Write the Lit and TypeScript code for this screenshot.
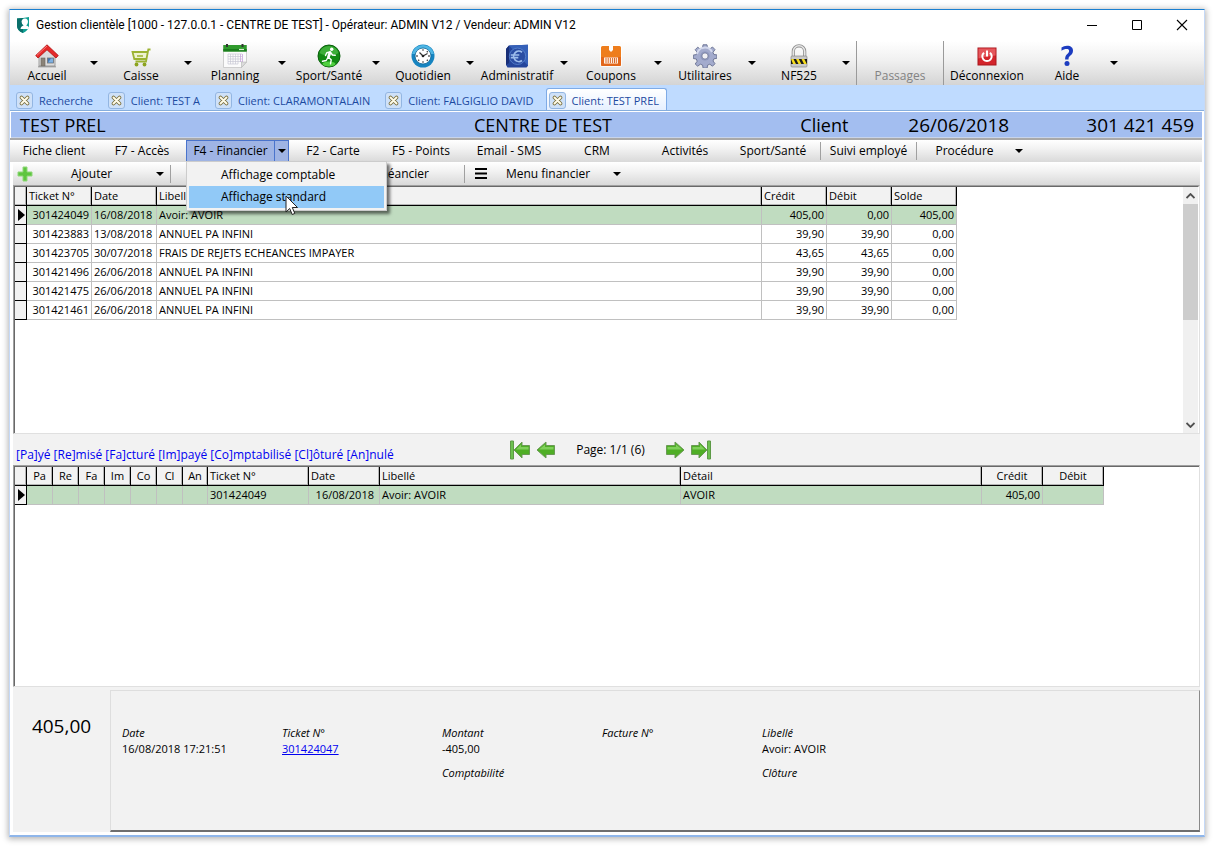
import { LitElement, html, css, svg, nothing, TemplateResult } from "lit";
import { customElement } from "lit/decorators.js";
import { classMap } from "lit/directives/class-map.js";

const icon = (body: TemplateResult, cls = "icon", box = "0 0 24 24") =>
  html`<svg class=${cls} viewBox=${box} aria-hidden="true">${body}</svg>`;

const icons: Record<string, TemplateResult> = {
  home: svg`
    <path d="M4 12 12 5l8 7v10H4z" fill="#dcdcdc" stroke="#8b8b8b" stroke-width=".8"/>
    <rect x="6" y="14" width="4" height="8" fill="#8a8378" stroke="#6b665e" stroke-width=".6"/>
    <rect x="12.500" y="14" width="6" height="5" fill="#3f78b5" stroke="#777" stroke-width=".8"/>
    <path d="M13 18.500l3-4h2v4z" fill="#7fb0e0"/>
    <path d="M12 .8 23.300 11.500l-2.300 2.500L12 5.800 3 14 .7 11.500z" fill="#e52a2a" stroke="#b31212" stroke-width=".8" stroke-linejoin="round"/>
    <path d="M12 2 2 11.300" stroke="#f77" stroke-width="1" fill="none"/>
    <path d="M3 22.800h18" stroke="#8b8b8b" stroke-width="1"/>`,
  cart: svg`
    <path d="M3.500 8h15l-1 7H5.500z" fill="#eef3cf"/>
    <path d="M21.500 5.500h-2.200L17 17.500H6.500M18.800 8H3.500l1.800 7h12" fill="none" stroke="#9cb332" stroke-width="1.800"/>
    <path d="M8 12h6" stroke="#9cb332" stroke-width="1.500"/>
    <circle cx="7.500" cy="20.500" r="1.900" fill="#8ba31f"/><circle cx="15.500" cy="20.500" r="1.900" fill="#8ba31f"/>`,
  calendar: svg`
    <path d="M.5 1.500h23V18l-5 5.500H.5z" fill="#fbfbfb" stroke="#c4c4c4" stroke-width=".8"/>
    <path d="M.3 1h23.400v6.500H.3z" fill="#2f9a2c"/><path d="M.3 5h23.400v2.500H.3z" fill="#1b7d1d"/>
    <path d="M4 0v3M19.500 0v3" stroke="#333" stroke-width="2"/><path d="M16 5.500h5" stroke="#d7f2d0" stroke-width="1.200"/>
    <path d="M5 10h14M5 12.500h14M5 15h14M5 17.500h14M5 20h10M5 10v10M7.500 10v10M10 10v10M12.500 10v10M15 10v10" stroke="#c9c9d4" stroke-width=".7" fill="none"/>
    <path d="M17.500 10v8M19.500 10v8" stroke="#c8a6dc" stroke-width=".8"/>
    <path d="M18.500 23.500V18h5z" fill="#ddd" stroke="#aaa" stroke-width=".5"/>`,
  runner: svg`
    <circle cx="12" cy="12" r="11" fill="#128a12" stroke="#0a5f0c" stroke-width="1"/>
    <path d="M2.500 9a10 10 0 0 1 19 0c-6 3.500-13 3.500-19 0z" fill="#4cba46" opacity=".75"/>
    <ellipse cx="12" cy="20" rx="6.500" ry="2.500" fill="#5fe04b" opacity=".8"/>
    <circle cx="14.700" cy="5.200" r="1.700" fill="#fff"/>
    <path d="M13 8l-1.800 5 3 2.800-.7 4M11.200 13l-2 3.500-3.700.8M13 8l-3.200.7-1.300 2.800M13.500 8.300l2 2.700 2.700.3" fill="none" stroke="#fff" stroke-width="1.400" stroke-linecap="round" stroke-linejoin="round"/>
    <path d="M13 8.500l-1.500 4.500" stroke="#fff" stroke-width="2.600" stroke-linecap="round"/>`,
  clock: svg`
    <circle cx="12" cy="12" r="11.500" fill="#1684c0"/><path d="M1 10a11.200 11.200 0 0 1 22 0z" fill="#4fb6e4"/>
    <circle cx="12" cy="12" r="8" fill="#fff" stroke="#0d6597" stroke-width=".8"/>
    <path d="M12 12 8.500 8.500M12 12l4.500-2.500" stroke="#333" stroke-width="1.200"/><circle cx="12" cy="12" r="1.300" fill="#222"/>
    <path d="M12 5.200v1.600M12 17.200v1.600M5.200 12h1.600M17.200 12h1.600M7.200 16.800l1-1M16.800 16.800l-1-1M16.800 7.200l-1 1" stroke="#444" stroke-width="1.300"/>`,
  euro: svg`
    <path d="M4 1.500 23 .8v21L21.500 23.500H2.500L1 21V5z" fill="#24459b"/>
    <path d="M4 1.500 23 .8v21z" fill="#3560b8"/><path d="M4 1.500 1 5v16l3-2z" fill="#182f78"/>
    <circle cx="12.500" cy="12.300" r="8.200" fill="#2a4da3" stroke="#5b86d0" stroke-width=".8"/>
    <path d="M17 8.200A5.200 5.200 0 1 0 17 16.500M5.800 11h8.500M5.800 13.600h7.500" fill="none" stroke="#9dbdec" stroke-width="1.700"/>`,
  coupon: svg`
    <rect x="1" y="1" width="22" height="22" rx="2" fill="#fff" opacity=".8"/>
    <path d="M2 3.500Q2 2 3.500 2H10v4l2 2 2-2V2h6.500Q22 2 22 3.500v17q0 1.500-1.500 1.500h-17Q2 22 2 20.500z" fill="#ee7d1c"/>
    <path d="M2 13h20v7.500q0 1.500-1.500 1.500h-17Q2 22 2 20.500z" fill="#e2661a"/>
    <rect x="5" y="13.500" width="14" height="6" fill="#fff3e6"/>
    <path d="M7 14v5M9.200 14v5M11.400 14v5M13.600 14v5M15.500 14v5M17.300 14v5" stroke="#d9682a" stroke-width="1"/>`,
  gear: svg`
    <path d="M10 .8h4l.5 3.300 2.200.9L19.500 3l2.500 2.600-2 2.700.9 2.200 3 .4v3.400l-3 .5-.9 2.200 2 2.700-2.500 2.500-2.700-2-2.200.9-.5 3h-4l-.5-3-2.200-.9-2.700 2L2.200 20l2-2.800-.9-2.200-3-.5v-3.400l3-.5.9-2.200-2-2.700L4.700 3.200l2.700 2 2.200-.9z" fill="#a3abcd" stroke="#707898" stroke-width="1" stroke-linejoin="round"/>
    <path d="M4 10a8 8 0 0 1 15-2" fill="none" stroke="#d3d8ec" stroke-width="2"/>
    <circle cx="12" cy="12" r="4.600" fill="#8d96bb"/><circle cx="12" cy="12" r="3" fill="#f1f1f4" stroke="#6a7190" stroke-width=".6"/>`,
  lock: svg`
    <path d="M6.300 13V7.500a5.700 5.700 0 0 1 11.400 0V13" fill="none" stroke="#8f8f8f" stroke-width="3.200"/>
    <path d="M6.300 13V7.500a5.700 5.700 0 0 1 11.400 0V13" fill="none" stroke="#e6e6e6" stroke-width="1.600"/>
    <rect x="4" y="12" width="16" height="11" rx="1" fill="#c9c9c9" stroke="#888" stroke-width=".7"/>
    <rect x="4" y="15" width="16" height="5" fill="#1b1b1b"/>
    <path d="M4 15h2.500l2.500 5H6zM9 15h2.800l2.500 5h-2.800zM14.500 15h2.800l2.500 5H17z" fill="#f6dc1c"/>`,
  power: svg`
    <rect x="3" y="4" width="18" height="17" fill="#d3242b" stroke="#a8161c" stroke-width="1"/><path d="M3.500 4.500h17v7c-6 1-12 1-17 3z" fill="#e4575c"/>
    <path d="M9 8.800a4.700 4.700 0 1 0 6 0M12 6.500v6" fill="none" stroke="#fff" stroke-width="2"/>`,
  help: svg`
    <path d="M6.500 6.800V3.500Q8.800 1.800 12 1.800c4 0 6 2 6 5 0 2.700-1.600 3.900-3.100 5.200-1 .9-1.400 1.600-1.400 3.500h-3.400c0-2.800.6-4.200 2.200-5.600 1.200-1 1.800-1.700 1.800-2.900 0-1.400-.9-2-2.400-2-1.900 0-3.600.6-5.200 1.800z" fill="#1c3cc0"/>
    <circle cx="12" cy="19.500" r="2.500" fill="#1c3cc0"/>`,
};

interface Tool { label: string; icon?: string; menu?: boolean; disabled?: boolean; sep?: boolean; size: string }
const tools: Tool[] = [
  { label: "Accueil", icon: "home", menu: true, size: "std" },
  { label: "Caisse", icon: "cart", menu: true, size: "std" },
  { label: "Planning", icon: "calendar", menu: true, size: "std" },
  { label: "Sport/Santé", icon: "runner", menu: true, size: "std" },
  { label: "Quotidien", icon: "clock", menu: true, size: "std" },
  { label: "Administratif", icon: "euro", menu: true, size: "std" },
  { label: "Coupons", icon: "coupon", menu: true, size: "std" },
  { label: "Utilitaires", icon: "gear", menu: true, size: "std" },
  { label: "NF525", icon: "lock", menu: true, size: "std" },
  { label: "Passages", disabled: true, sep: true, size: "wide" },
  { label: "Déconnexion", icon: "power", sep: true, size: "wide" },
  { label: "Aide", icon: "help", menu: true, size: "std" },
];

const tabs = ["Recherche", "Client: TEST A", "Client: CLARAMONTALAIN", "Client: FALGIGLIO DAVID", "Client: TEST PREL"];

const tickets = [
  ["301424049", "16/08/2018", "Avoir: AVOIR", "405,00", "0,00", "405,00"],
  ["301423883", "13/08/2018", "ANNUEL PA INFINI", "39,90", "39,90", "0,00"],
  ["301423705", "30/07/2018", "FRAIS DE REJETS ECHEANCES IMPAYER", "43,65", "43,65", "0,00"],
  ["301421496", "26/06/2018", "ANNUEL PA INFINI", "39,90", "39,90", "0,00"],
  ["301421475", "26/06/2018", "ANNUEL PA INFINI", "39,90", "39,90", "0,00"],
  ["301421461", "26/06/2018", "ANNUEL PA INFINI", "39,90", "39,90", "0,00"],
];

const flags = ["Pa", "Re", "Fa", "Im", "Co", "Cl", "An"];

@customElement("app-root")
export class AppRoot extends LitElement {
  static styles = css`
    :host { display: block; background: #fff; color: #000; font: 12px/16px "Open Sans", "Noto Sans", sans-serif; }
    * { box-sizing: border-box; }
    button { font: inherit; color: inherit; background: none; border: 0; padding: 0; margin: 0; white-space: nowrap; }
    .stage { min-height: 100vh; padding: 9px 8px 9px 9px; display: flex; }
    .window { flex: 1; min-width: 0; display: flex; flex-direction: column; background: #fff;
      border: 1px solid #c5d9f7; border-top-color: #1a7fd0; border-bottom: 2px solid #8fb6ea;
      box-shadow: 0 1px 6px 1px rgba(0, 0, 0, .3); }

    .titlebar { display: flex; align-items: center; height: 31px; padding: 0 0 2px 6px; font: 12px/16px Roboto, sans-serif; }
    .logo { width: 14px; height: 16px; margin-right: 6px; }
    .caption { flex: 1; margin: 0; font: inherit; }
    .winbtn { width: 45px; height: 28px; display: grid; place-items: center; }
    .winbtn svg { width: 12px; height: 12px; }

    .toolbar { display: flex; height: 44px; background: linear-gradient(#fff, #f0f0f0 45%, #d4d4d4); }
    .tool { display: flex; padding-bottom: 1px; }
    .tool.sep { border-left: 1px solid #9a9a9a; }
    .tool-main { display: flex; flex-direction: column; align-items: center; justify-content: flex-end; }
    .tool.std .tool-main { width: 74px; }
    .tool.wide .tool-main { width: 86px; }
    .tool-main:disabled { color: #838383; }
    .icon { width: 24px; height: 24px; display: block; }
    .drop { width: 20px; display: grid; place-items: center; }
    .caret { width: 8px; height: 4px; display: block; fill: #000; }

    .tabs { display: flex; align-items: flex-end; gap: 4px; height: 26px; padding: 0 3px; background: #bfdbff;
      border-bottom: 1px solid #86aedd; font-size: 11px; color: #1c4aa0; }
    .tab { display: flex; align-items: center; gap: 6px; height: 22px; padding: 2px 7px 0 2px; border: 1px solid transparent; border-bottom: 0; }
    .tab.on { border-color: #7fabe6; border-radius: 3px 3px 0 0; background: linear-gradient(#fff, #e6f0ff); }
    .close { width: 17px; height: 17px; border: 1px solid #93b6e2; border-radius: 3px; background: #cfe1f8; display: grid; place-items: center; }
    .close svg { width: 11px; height: 11px; }

    .band { display: grid; grid-template-columns: 454px 1fr auto; align-items: center; height: 26px; margin: 1px 2px 0 1px; padding: 0 8px 0 9px;
      background: #a3bef0; border-bottom: 1px solid #c8d4ea; font-size: 18px; line-height: 24px; }
    .band .who { display: grid; grid-template-columns: 108px 178px auto; }
    .band .number { font-size: 19px; }

    .menubar, .subbar { display: flex; background: linear-gradient(#fff, #f2f2f2 40%, #d9d9d9); }
    .menubar { position: relative; height: 24px; margin-right: 2px; border-top: 2px solid #a9a9a9; }
    .mi { width: 88px; text-align: center; }
    .split { display: flex; width: 103px; border: 1px solid #4a74cc; background: #9fb4e4; position: relative; }
    .split .mi { flex: 1; width: auto; }
    .menubar .drop { width: 14px; }
    .split .drop { border-left: 1px solid #4a74cc; }
    .rule { border-left: 1px solid #a0a0a0; margin: 2px 0 2px 3px; }
    .rule.tight { margin-left: 0; }
    .mi.wide { width: 95px; }

    .popup { position: absolute; z-index: 5; left: -1px; top: 20px; width: 201px; margin: 0; padding: 2px; list-style: none;
      background: #f2f2f2; border: 1px solid #ccc; box-shadow: 3px 3px 3px rgba(0, 0, 0, .55); }
    .popup button { display: block; width: 100%; height: 22px; padding-left: 32px; text-align: left; }
    .popup .hot { background: #91c9f7; }
    .cursor { position: absolute; z-index: 6; left: 98px; top: 54px; width: 14px; height: 21px; }

    .body { flex: 1; display: flex; flex-direction: column; padding: 0 4px 3px 3px; background: #fff; }
    .subbar { height: 23px; align-items: center; }
    .subbar .rule { height: 18px; margin: 0; }
    .plus { width: 16px; height: 16px; margin-left: 4px; }
    .add { width: 117px; text-align: center; }
    .due { width: 293px; padding-right: 35px; text-align: right; }
    .bars { width: 12px; height: 11px; margin: 0 10px; }
    .fin { width: 102px; margin-right: 8px; }

    .pane { display: flex; background: #fff; border: 1px solid #e0e0e0; border-left-color: #a0a0a0; border-top-color: #a0a0a0; }
    .pane.main { flex: 249 1 249px; }
    .pane.lines { flex: 222 1 222px; }
    .grid-wrap { flex: 1; min-width: 0; overflow: hidden; border-left: 1px solid #696969; border-top: 1px solid #696969; }
    table { border-collapse: separate; border-spacing: 0; table-layout: fixed; font-size: 11px; line-height: 16px; }
    .t1 { width: 942px; } .t2 { width: 1089px; }
    th { height: 19px; padding: 0 2px; text-align: left; font-weight: normal; background: #f2f2f2; white-space: nowrap;
      border-right: 1px solid #000; border-bottom: 1px solid #000; box-shadow: inset -1px -1px #b5b5b5; }
    th.mid { text-align: center; }
    td { height: 19px; padding: 0 2px; border-right: 1px solid #c0c0c0; border-bottom: 1px solid #c0c0c0; white-space: nowrap; overflow: hidden; }
    td.num { text-align: right; }
    td.date { text-align: right; padding-right: 5px; }
    tr.sel td { background: #c0dcc0; }
    td.mark, tr.sel td.mark { padding: 0; background: #f2f2f2; border-right-color: #000; border-bottom-color: #000; }
    td.mark svg { display: block; width: 7px; height: 12px; margin-left: 3px; }
    .c-mark { width: 12px; } .c-65 { width: 65px; } .c-605 { width: 605px; }
    .c-26 { width: 26px; } .c-25 { width: 25px; } .c-101 { width: 101px; } .c-71 { width: 71px; } .c-301 { width: 301px; } .c-61 { width: 61px; }

    .scroll { width: 16px; display: flex; flex-direction: column; background: #f0f0f0; border-top: 1px solid #696969; border-right: 1px solid #fff; }
    .scroll button { height: 17px; display: grid; place-items: center; }
    .scroll .down { margin-top: auto; }
    .scroll svg { width: 9px; height: 6px; }
    .thumb { height: 116px; background: #cdcdcd; }

    .pager { display: grid; grid-template-columns: 1fr auto 1fr; height: 31px; padding-left: 3px; background: #f2f2f2; }
    .legend { align-self: end; color: #0000f0; white-space: nowrap; line-height: 20px; }
    .nav { display: flex; align-items: center; gap: 6px; margin-left: 5px; }
    .nav span { margin: 0 14px; }
    .nav svg { width: 20px; height: 20px; display: block; }

    .foot { display: flex; height: 145px; padding-top: 3px; background: #f2f2f2; }
    .total { width: 97px; padding-top: 23px; text-align: center; font-size: 19px; line-height: 26px; }
    .detail { flex: 1; display: grid; grid-template-columns: repeat(5, 160px); align-content: start; margin: 0; padding: 34px 0 0 11px;
      border: 1px solid #dedede; border-right: 1px solid #8a8a8a; border-bottom: 2px solid #6e6e6e; font-size: 11px; line-height: 16px; }
    .field { min-height: 40px; }
    dt { font-style: italic; } dd { margin: 0; }
    a { color: #0000f0; }
  `;

  private caret() { return html`<svg class="caret" viewBox="0 0 8 4" aria-hidden="true"><path d="M0 0h8L4 4z"/></svg>`; }

  private tool(t: Tool) {
    return html`<div class=${classMap({ tool: true, [t.size]: true, sep: !!t.sep })}>
      <button class="tool-main" ?disabled=${t.disabled}>${t.icon ? icon(icons[t.icon]) : nothing}<span>${t.label}</span></button>
      ${t.menu ? html`<button class="drop" aria-label=${t.label + " : menu"}>${this.caret()}</button>` : nothing}
    </div>`;
  }

  private mark(on: boolean) {
    return html`<td class="mark">${on ? html`<svg viewBox="0 0 7 12" aria-hidden="true"><path d="M0 0l7 6-7 6z"/></svg>` : nothing}</td>`;
  }

  private arrow(label: string, right: boolean, bar: boolean) {
    return html`<button aria-label=${label}><svg viewBox="0 0 20 20" aria-hidden="true"><g transform=${right ? "matrix(-1 0 0 1 20 0)" : "translate(0 0)"}>
      ${bar ? svg`<path d="M.5 1h3v18h-3z" fill="#6cc04f" stroke="#5d9a46"/>` : nothing}
      <path d=${bar ? "M4 10l8-8v3.500h7.500v9H12v3.500z" : "M1 10l9-8v3.500h8.500v9H10v3.500z"} fill="#4fae25" stroke="#6a9a55" stroke-linejoin="round"/>
      <path d=${bar ? "M6 9.500l5-5v2.500h7.500v2.500z" : "M3 9.500l6-5v2.500h8.500v2.500z"} fill="#7fcf5a"/></g></svg></button>`;
  }

  private field(label: string, value: unknown = nothing) {
    return html`<div class="field"><dt>${label}</dt><dd>${value}</dd></div>`;
  }

  render() {
    return html`<div class="stage"><main class="window">
      <header class="titlebar">
        <svg class="logo" viewBox="0 0 14 16" aria-hidden="true"><path d="M1 1.500Q7 1 13 0v9.500q-1 4-6 6.500Q1 13.500 1 9z" fill="#0f9f93"/><path d="M1 1.500Q4 1.300 7 .9V16Q1 13.500 1 9z" fill="#0b6f6a"/><path d="M5.500 4.500Q6 1.500 9 1.500t3 3.500q-.3 2.500-1.800 3.500 2.300.5 2.800 2l-.7 1.500H4.500q.3-3 3.200-3.500Q5.500 7 5.500 4.500z" fill="#fff"/></svg>
        <h1 class="caption">Gestion clientèle [1000 - 127.0.0.1 - CENTRE DE TEST] - Opérateur: ADMIN V12 / Vendeur: ADMIN V12</h1>
        <button class="winbtn" aria-label="Réduire"><svg viewBox="0 0 12 12"><path d="M1 6.500h10" stroke="#000"/></svg></button>
        <button class="winbtn" aria-label="Agrandir"><svg viewBox="0 0 12 12"><path d="M1.500 1.500h9v9h-9z" fill="none" stroke="#000"/></svg></button>
        <button class="winbtn" aria-label="Fermer"><svg viewBox="0 0 12 12"><path d="M1 1l10 10M11 1L1 11" stroke="#000" stroke-width="1.100"/></svg></button>
      </header>
      <nav class="toolbar">${tools.map((t) => this.tool(t))}</nav>
      <nav class="tabs">${tabs.map((t, i) => html`<div class=${classMap({ tab: true, on: i === tabs.length - 1 })}>
        <button class="close" aria-label=${"Fermer " + t}><svg viewBox="0 0 11 11"><path d="M2.500 2.500l6 6M8.500 2.500l-6 6" stroke="#776c3a" stroke-width="3.600" stroke-linecap="round"/><path d="M2.500 2.500l6 6M8.500 2.500l-6 6" stroke="#fffbe8" stroke-width="2" stroke-linecap="round"/></svg></button>
        <button>${t}</button></div>`)}</nav>
      <div class="band"><span>TEST PREL</span><span>CENTRE DE TEST</span>
        <div class="who"><span>Client</span><span class="number">26/06/2018</span><span class="number">301 421 459</span></div></div>
      <nav class="menubar">
        <button class="mi">Fiche client</button><button class="mi">F7 - Accès</button>
        <div class="split"><button class="mi">F4 - Financier</button><button class="drop" aria-label="F4 - Financier : menu" aria-expanded="true">${this.caret()}</button>
          <ul class="popup"><li><button>Affichage comptable</button></li><li><button class="hot">Affichage standard</button></li></ul>
          <svg class="cursor" viewBox="0 0 14 21" aria-hidden="true"><path d="M1 1v16l3.700-3.500L7.200 19.500l2.600-1.100-2.500-5.900h5.200z" fill="#fff" stroke="#222" stroke-width="1"/></svg>
        </div>
        <button class="mi">F2 - Carte</button><button class="mi">F5 - Points</button><button class="mi">Email - SMS</button><button class="mi">CRM</button>
        <button class="mi">Activités</button><button class="mi">Sport/Santé</button><span class="rule"></span>
        <button class="mi wide">Suivi employé</button><span class="rule tight"></span><button class="mi wide">Procédure</button>
        <button class="drop" aria-label="Procédure : menu">${this.caret()}</button>
      </nav>
      <div class="body">
        <div class="subbar">
          <svg class="plus" viewBox="0 0 16 16" aria-hidden="true"><path d="M6 1h4v5h5v4h-5v5H6v-5H1V6h5z" fill="#5fc540" stroke="#8fd878"/></svg>
          <button class="add">Ajouter</button><button class="drop" aria-label="Ajouter : menu">${this.caret()}</button><span class="rule"></span>
          <button class="due">Échéancier</button><span class="rule"></span>
          <svg class="bars" viewBox="0 0 12 11" aria-hidden="true"><path d="M0 1h12M0 5.500h12M0 10h12" stroke="#000" stroke-width="2"/></svg>
          <button class="fin">Menu financier</button><button class="drop" aria-label="Menu financier : menu">${this.caret()}</button>
        </div>
        <section class="pane main"><div class="grid-wrap"><table class="t1">
          <thead><tr><th class="c-mark"></th><th class="c-65">Ticket N°</th><th class="c-65">Date</th><th class="c-605">Libellé</th><th class="c-65">Crédit</th><th class="c-65">Débit</th><th class="c-65">Solde</th></tr></thead>
          <tbody>${tickets.map((r, i) => html`<tr class=${i ? "" : "sel"}>${this.mark(!i)}${r.map((c, k) => html`<td class=${k === 2 || k === 1 ? "" : "num"}>${c}</td>`)}</tr>`)}</tbody>
        </table></div>
          <div class="scroll"><button aria-label="Défiler vers le haut"><svg viewBox="0 0 9 6"><path d="M.5 5l4-4 4 4" fill="none" stroke="#505050" stroke-width="1.800"/></svg></button>
            <div class="thumb"></div><button class="down" aria-label="Défiler vers le bas"><svg viewBox="0 0 9 6"><path d="M.5 1l4 4 4-4" fill="none" stroke="#505050" stroke-width="1.800"/></svg></button></div>
        </section>
        <div class="pager"><span class="legend">[Pa]yé [Re]misé [Fa]cturé [Im]payé [Co]mptabilisé [Cl]ôturé [An]nulé</span>
          <div class="nav">${this.arrow("Première page", false, true)}${this.arrow("Page précédente", false, false)}<span>Page: 1/1 (6)</span>${this.arrow("Page suivante", true, false)}${this.arrow("Dernière page", true, true)}</div></div>
        <section class="pane lines"><div class="grid-wrap"><table class="t2">
          <thead><tr><th class="c-mark"></th>${flags.map((f, i) => html`<th class=${"mid " + (i === 6 ? "c-25" : "c-26")}>${f}</th>`)}<th class="c-101">Ticket N°</th><th class="c-71">Date</th><th class="c-301">Libellé</th><th class="c-301">Détail</th><th class="mid c-61">Crédit</th><th class="mid c-61">Débit</th></tr></thead>
          <tbody><tr class="sel">${this.mark(true)}${flags.map(() => html`<td></td>`)}<td>301424049</td><td class="date">16/08/2018</td><td>Avoir: AVOIR</td><td>AVOIR</td><td class="num">405,00</td><td></td></tr></tbody>
        </table></div></section>
        <footer class="foot"><div class="total">405,00</div>
          <dl class="detail">
            ${this.field("Date", "16/08/2018 17:21:51")}${this.field("Ticket N°", html`<a href="#">301424047</a>`)}${this.field("Montant", "-405,00")}${this.field("Facture N°")}${this.field("Libellé", "Avoir: AVOIR")}
            <div></div><div></div>${this.field("Comptabilité")}<div></div>${this.field("Clôture")}
          </dl></footer>
      </div>
    </main></div>`;
  }
}
